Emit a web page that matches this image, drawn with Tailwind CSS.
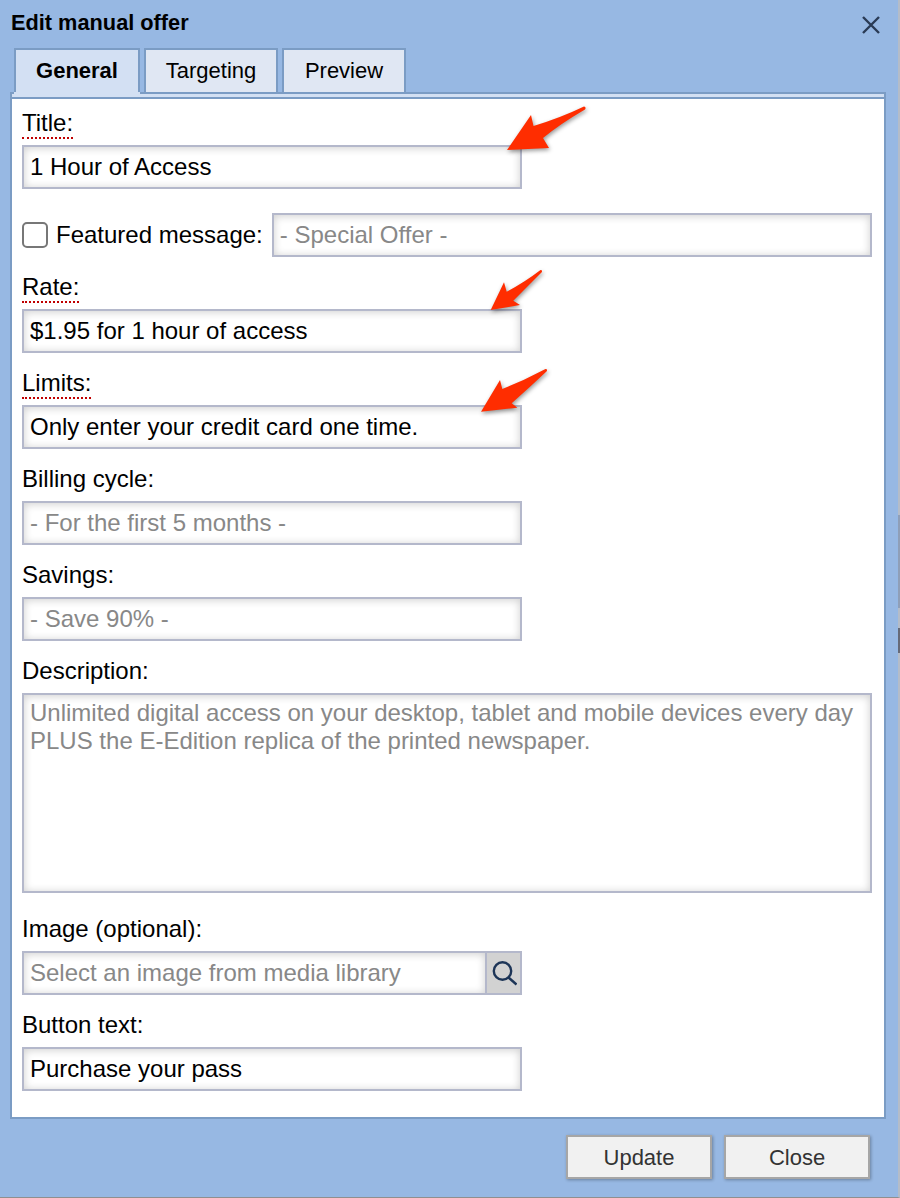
<!DOCTYPE html>
<html lang="en">
<head>
  <meta charset="UTF-8">
  <title>Edit manual offer</title>
  <script src="https://cdn.jsdelivr.net/npm/@tailwindcss/browser@4"></script>
</head>
<body class="bg-[#97b8e3] font-['Liberation_Sans',Arial,sans-serif] text-[24px] text-black">
  <div class="relative w-[900px] h-[1198px] border-r-2 border-b border-r-[#b4bcc8] border-b-[#8f8f8f]">
    <!-- header -->
    <div class="flex items-center justify-between h-[46px] pl-[11px] pr-[17px]">
      <h1 class="text-[21.75px] leading-[46px] font-bold">Edit manual offer</h1>
      <button class="w-[20px] h-[20px] mt-[4px]">
        <svg viewBox="0 0 20 20" class="w-[20px] h-[20px]" fill="none" stroke="#2a3b55" stroke-width="2.4"><path d="M2 2 L18 18 M18 2 L2 18"/></svg>
      </button>
    </div>

    <!-- tabs -->
    <div class="relative z-10 flex items-start gap-[4px] pl-[14px] mt-[2px] h-[44px] text-[22px]">
      <div class="relative w-[126px] h-[44px] border-2 border-b-0 border-[#7b9cc4] bg-[#d3e0f3] text-center font-bold leading-[42px]">
        General
        <div class="absolute -left-[2px] -right-[2px] -bottom-[2px] h-[2px] bg-[#d3e0f3]"></div>
      </div>
      <div class="w-[134px] h-[44px] border-2 border-b-0 border-[#7b9cc4] bg-[#e0e7f3] text-center leading-[42px]">Targeting</div>
      <div class="w-[124px] h-[44px] border-2 border-b-0 border-[#7b9cc4] bg-[#e0e7f3] text-center leading-[42px]">Preview</div>
    </div>

    <!-- panel -->
    <div class="ml-[10px] w-[876px] h-[1027px] border-2 border-[#7b9cc4] bg-white">
      <div class="h-[5px] border-b-2 border-[#7b9cc4] bg-[#d3e0f3]"></div>
      <form class="pl-[10px] pt-[10px]">
        <div>
          <label class="inline-block leading-[28px] border-b-2 border-dotted border-[#c00000] mb-[6px] align-top">Title:</label>
          <input type="text" value="1 Hour of Access" class="block w-[500px] h-[44px] px-[6px] border-2 border-[#b4b8cb] shadow-[inset_0_1px_8px_rgba(0,0,0,0.2)]">
        </div>

        <div class="flex items-center mt-[24px]">
          <input type="checkbox" class="appearance-none w-[26px] h-[26px] rounded-[5px] border-2 border-[#777777] bg-white">
          <label class="ml-[8px] mr-[9px]">Featured message:</label>
          <input type="text" placeholder="- Special Offer -" class="w-[600px] h-[44px] px-[6px] border-2 border-[#b4b8cb] shadow-[inset_0_1px_8px_rgba(0,0,0,0.2)] placeholder:text-[#888888]">
        </div>

        <div class="mt-[16px]">
          <label class="inline-block leading-[28px] border-b-2 border-dotted border-[#c00000] mb-[6px] align-top">Rate:</label>
          <input type="text" value="$1.95 for 1 hour of access" class="block w-[500px] h-[44px] px-[6px] border-2 border-[#b4b8cb] shadow-[inset_0_1px_8px_rgba(0,0,0,0.2)]">
        </div>

        <div class="mt-[16px]">
          <label class="inline-block leading-[28px] border-b-2 border-dotted border-[#c00000] mb-[6px] align-top">Limits:</label>
          <input type="text" value="Only enter your credit card one time." class="block w-[500px] h-[44px] px-[6px] border-2 border-[#b4b8cb] shadow-[inset_0_1px_8px_rgba(0,0,0,0.2)]">
        </div>

        <div class="mt-[16px]">
          <label class="block leading-[28px] mb-[8px]">Billing cycle:</label>
          <input type="text" placeholder="- For the first 5 months -" class="block w-[500px] h-[44px] px-[6px] border-2 border-[#b4b8cb] shadow-[inset_0_1px_8px_rgba(0,0,0,0.2)] placeholder:text-[#888888]">
        </div>

        <div class="mt-[16px]">
          <label class="block leading-[28px] mb-[8px]">Savings:</label>
          <input type="text" placeholder="- Save 90% -" class="block w-[500px] h-[44px] px-[6px] border-2 border-[#b4b8cb] shadow-[inset_0_1px_8px_rgba(0,0,0,0.2)] placeholder:text-[#888888]">
        </div>

        <div class="mt-[16px]">
          <label class="block leading-[28px] mb-[8px]">Description:</label>
          <textarea placeholder="Unlimited digital access on your desktop, tablet and mobile devices every day PLUS the E-Edition replica of the printed newspaper." class="block w-[850px] h-[200px] px-[6px] py-[4px] leading-[28px] resize-none border-2 border-[#b4b8cb] shadow-[inset_0_1px_8px_rgba(0,0,0,0.2)] placeholder:text-[#888888]"></textarea>
        </div>

        <div class="mt-[22px]">
          <label class="block leading-[28px] mb-[8px]">Image (optional):</label>
          <div class="flex w-[500px] h-[44px] border-2 border-[#b4b8cb]">
            <input type="text" placeholder="Select an image from media library" class="flex-1 min-w-0 px-[6px] shadow-[inset_0_1px_8px_rgba(0,0,0,0.2)] placeholder:text-[#888888]">
            <div class="flex items-center justify-center w-[35px] border-l-2 border-[#b4b8cb] bg-[#d2d2d2]">
              <svg viewBox="0 0 26 26" class="w-[26px] h-[26px]" fill="none" stroke="#1d3557" stroke-width="2.4"><circle cx="11.5" cy="11" r="8.7"/><path d="M17.5 17.5 L25.5 24.5"/></svg>
            </div>
          </div>
        </div>

        <div class="mt-[16px]">
          <label class="block leading-[28px] mb-[8px]">Button text:</label>
          <input type="text" value="Purchase your pass" class="block w-[500px] h-[44px] px-[6px] border-2 border-[#b4b8cb] shadow-[inset_0_1px_8px_rgba(0,0,0,0.2)]">
        </div>
      </form>
    </div>

    <!-- footer buttons -->
    <div class="flex justify-end gap-[12px] w-[870px] mt-[16px]">
      <button class="w-[146px] h-[44px] border-2 border-[#a6a6a6] bg-[#f1f1f1] text-[#333333] text-[22px] shadow-[1px_1px_3px_rgba(0,0,0,0.3)]">Update</button>
      <button class="w-[146px] h-[44px] border-2 border-[#a6a6a6] bg-[#f1f1f1] text-[#333333] text-[22px] shadow-[1px_1px_3px_rgba(0,0,0,0.3)]">Close</button>
    </div>

    <!-- page behind the dialog, showing at the right edge -->
    <div class="absolute left-[898px] top-[515px] w-[2px] h-[93px] bg-[#8f9fb8]"></div>
    <div class="absolute left-[898px] top-[628px] w-[2px] h-[25px] bg-[#666a78]"></div>

    <!-- annotation arrows drawn over the screenshot -->
    <svg class="absolute left-0 top-0 w-[900px] h-[1198px] pointer-events-none drop-shadow-[1px_2px_2px_rgba(0,0,0,0.4)]" viewBox="0 0 900 1198" fill="#ff2d00">
      <path d="M507 150 L531 115 L533.5 126 Q560 118 584 106.5 Q586.5 107 585 109.5 Q560 124 543 138 L549 148 Z"/>
      <path d="M490.7 310 L504 282.3 L506.7 291.7 Q525 282 540.5 270 Q543 270 541.5 272.5 Q527 287 513.3 300.7 L520 305 Z"/>
      <path d="M481 411.7 L500 380 L502.3 389 Q525 380 545.5 369 Q548 369 546.5 371.5 Q530 387 511.7 403.3 L517.3 407.7 Z"/>
    </svg>
  </div>
</body>
</html>
